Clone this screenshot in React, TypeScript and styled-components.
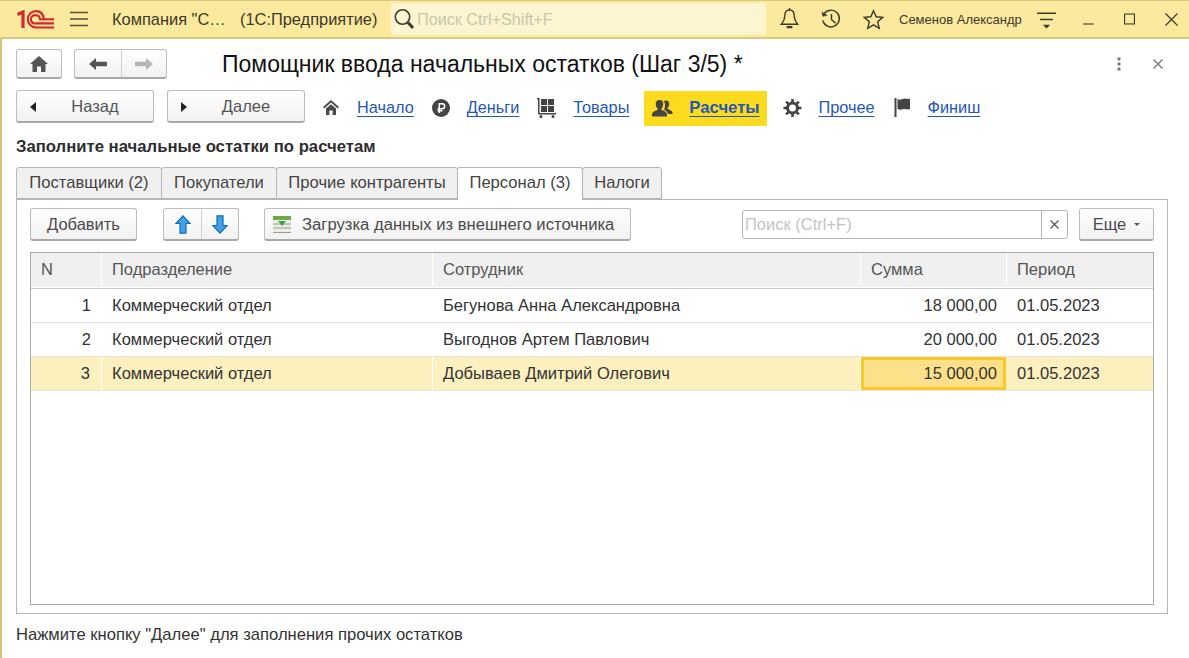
import React from "react";
import styled, { createGlobalStyle } from "styled-components";

const Global = createGlobalStyle`
  html, body { margin: 0; padding: 0; background: #fff; overflow: hidden; }
  * { box-sizing: border-box; }
  body { font-family: "Liberation Sans", Arial, sans-serif; color: #333; }
`;

const Page = styled.div`
  width: 1189px;
  height: 658px;
  display: flex;
  flex-direction: column;
  border-left: 2px solid #d2c67e;
  background: #fff;
`;

const TopBar = styled.header`
  height: 39px;
  flex: none;
  display: flex;
  align-items: center;
  background: #fbe99e;
  border-top: 1px solid #d6ca80;
  border-bottom: 2px solid #d6ca80;
  margin-left: -2px;
  padding-left: 17px;
`;

const MenuSlot = styled.span`
  margin-left: 16px;
  display: flex;
`;

const TopTitle = styled.div`
  margin-left: 24px;
  width: 279px;
  display: flex;
  font-size: 16.4px;
  color: #3d3a2a;
  white-space: nowrap;
`;

const TopCompany = styled.span`
  width: 128px;
`;

const GlobalSearch = styled.div`
  width: 375px;
  height: 32px;
  display: flex;
  align-items: center;
  gap: 2px;
  padding-left: 2px;
  background: #fdf5cf;
  font-size: 16.2px;
  color: #c9c5ae;
`;

const TopIcons = styled.div`
  display: flex;
  align-items: center;
  margin-left: 14px;
  gap: 22px;
`;

const UserName = styled.span`
  margin-left: 15px;
  font-size: 13px;
  color: #3d3a2a;
  white-space: nowrap;
`;

const WindowControls = styled.div`
  margin-left: 15px;
  display: flex;
  align-items: center;
  gap: 30px;
`;

const PanelSlot = styled.span`
  display: flex;
  margin-right: -3px;
`;

const Content = styled.main`
  flex: 1;
  display: flex;
  flex-direction: column;
  padding: 10px 21px 0 14px;
  min-height: 0;
`;

const FormHead = styled.div`
  height: 30px;
  display: flex;
  align-items: center;
  flex: none;
`;

const RaisedButton = styled.button<{ $w?: number; $h?: number }>`
  width: ${(p) => (p.$w ? `${p.$w}px` : "auto")};
  height: ${(p) => p.$h ?? 33}px;
  flex: none;
  padding: 0;
  display: inline-flex;
  align-items: center;
  justify-content: center;
  border: 1px solid #bdbdbd;
  border-bottom: 2px solid #a9a9a9;
  border-radius: 3px;
  background: linear-gradient(#ffffff, #f1f1f1);
  font: 16.5px "Liberation Sans", Arial, sans-serif;
  color: #4a4a4a;
`;

const Split = styled.span<{ $w: number }>`
  width: ${(p) => p.$w}px;
  height: 100%;
  display: flex;
  align-items: center;
  justify-content: center;
  & + & { border-left: 1px solid #cfcfcf; }
`;

const HistoryGroup = styled(RaisedButton)`
  margin-left: 12px;
`;

const MoveGroup = styled(RaisedButton)`
  margin-left: 26px;
`;

const LoadButton = styled(RaisedButton)`
  margin-left: 25px;
  justify-content: flex-start;
  padding: 1px 0 0 8px;
  font-size: 16.65px;
`;

const MoreButton = styled(RaisedButton)`
  margin-left: 11px;
`;

const FormTitle = styled.h1`
  margin: 0 0 0 55px;
  font-weight: 400;
  font-size: 23px;
  color: #111;
  white-space: nowrap;
`;

const FormActions = styled.div`
  margin-left: auto;
  margin-right: 5px;
  display: flex;
  align-items: center;
  gap: 32px;
`;

const StepRow = styled.nav`
  margin-top: 11px;
  height: 36px;
  flex: none;
  display: flex;
  align-items: flex-start;
`;

const StepButton = styled(RaisedButton)`
  position: relative;
  margin-right: 13px;
  padding: 1px 0 0 20px;
  color: #555;
`;

const StepArrow = styled.svg`
  position: absolute;
  left: 13px;
  top: 11px;
`;

const Steps = styled.div`
  display: flex;
  height: 35px;
  margin: 1px 0 0 -4px;
  gap: 2px;
  align-items: center;
`;

const StepItem = styled.div<{ $active?: boolean; $after?: number }>`
  height: 35px;
  display: flex;
  align-items: center;
  gap: ${(p) => (p.$active ? 16 : 17)}px;
  padding: 0 ${(p) => (p.$active ? 7 : 8)}px 2px 8px;
  margin-left: ${(p) => (p.$active ? "5px" : "0")};
  margin-right: ${(p) => p.$after ?? 0}px;
  background: ${(p) => (p.$active ? "#fcdb1e" : "transparent")};
`;

const StepLink = styled.a<{ $active?: boolean }>`
  color: #2557b8;
  font-size: ${(p) => (p.$active ? 16.7 : 16.3)}px;
  font-weight: ${(p) => (p.$active ? 700 : 400)};
  text-decoration: underline;
  text-underline-offset: 3px;
  white-space: nowrap;
`;

const Heading = styled.h2`
  margin: 11px 0 0;
  height: 20px;
  line-height: 20px;
  font-size: 16.7px;
  font-weight: 700;
  color: #2e2e2e;
  white-space: nowrap;
`;

const Tabs = styled.div`
  margin-top: 10px;
  display: flex;
  height: 33px;
  flex: none;
  position: relative;
  z-index: 1;
`;

const Tab = styled.div<{ $active?: boolean; $w: number }>`
  width: ${(p) => p.$w}px;
  height: ${(p) => (p.$active ? 33 : 32)}px;
  padding-bottom: ${(p) => (p.$active ? 2 : 1)}px;
  display: flex;
  align-items: center;
  justify-content: center;
  background: ${(p) => (p.$active ? "#fff" : "#f0f0f0")};
  border: 1px solid #b5b5b5;
  border-bottom: ${(p) => (p.$active ? "none" : "1px solid #b5b5b5")};
  border-radius: 3px 3px 0 0;
  margin-right: -1px;
  font-size: 16.6px;
  color: #444;
  white-space: nowrap;
`;

const Panel = styled.section`
  margin-top: -1px;
  height: 415px;
  flex: none;
  border: 1px solid #b5b5b5;
  padding: 8px 13px 8px 13px;
  display: flex;
  flex-direction: column;
`;

const Toolbar = styled.div`
  height: 33px;
  flex: none;
  display: flex;
  align-items: center;
`;

const ToolText = styled.span`
  margin-left: 11px;
  white-space: nowrap;
`;

const SearchField = styled.div`
  margin-left: auto;
  width: 326px;
  height: 29px;
  display: flex;
  border: 1px solid #b5b5b5;
  border-radius: 3px;
  background: #fff;
`;

const SearchHint = styled.span`
  flex: 1;
  padding-left: 2px;
  line-height: 26px;
  font-size: 16.5px;
  color: #c4c4c4;
`;

const ClearBox = styled.span`
  width: 26px;
  display: flex;
  align-items: center;
  justify-content: center;
  border-left: 1px solid #b5b5b5;
`;

const MoreCaret = styled.span`
  width: 0;
  height: 0;
  margin-left: 8px;
  margin-top: 1px;
  border-left: 3px solid transparent;
  border-right: 3px solid transparent;
  border-top: 3px solid #555;
`;

const Table = styled.div`
  margin-top: 11px;
  flex: 1;
  border: 1px solid #a9a9a9;
  background: #fff;
  min-height: 0;
`;

const columns = "71px 331px 428px 146px 1fr";

const HeaderRow = styled.div`
  height: 36px;
  display: grid;
  grid-template-columns: ${columns};
  background: #fff;
  border-bottom: 1px solid #c9c9c9;
`;

const HeaderCell = styled.div`
  display: flex;
  align-items: center;
  padding: 0 0 2px 10px;
  background: #f0f0f0;
  margin-right: 1px;
  margin-bottom: 1px;
  font-size: 16.5px;
  color: #555;
  &:last-child { margin-right: 0; }
`;

const Row = styled.div<{ $selected?: boolean }>`
  height: 34px;
  display: grid;
  grid-template-columns: ${columns};
  background: ${(p) => (p.$selected ? "#fdf0bf" : "#fff")};
  border-bottom: 1px solid #e4e4e4;
`;

const Cell = styled.div<{ $sep?: boolean }>`
  display: flex;
  align-items: center;
  padding-left: 10px;
  font-size: 16.55px;
  color: #333;
  white-space: nowrap;
  border-right: ${(p) => (p.$sep ? "1px solid #fff" : "none")};
`;

const NumberCell = styled(Cell)`
  justify-content: flex-end;
  padding: 0 11px 0 0;
`;

const SumCell = styled(Cell)<{ $current?: boolean }>`
  justify-content: flex-end;
  padding: 0 ${(p) => (p.$current ? 9 : 10)}px 0 0;
  ${(p) =>
    p.$current
      ? `background:#fee08a;outline:3px solid #fbc926;outline-offset:-3px;margin-right:1px;`
      : ""}
`;

const Footer = styled.p`
  margin: 11px 0 0;
  line-height: 20px;
  font-size: 16.6px;
  color: #333;
  white-space: nowrap;
`;

const Logo = () => (
  <svg width="37" height="19" viewBox="0 0 37 19" fill="none" stroke="#d8262c" strokeWidth="2.1">
    <path d="M0.5 4.6 L6 2 V18" strokeWidth="3.2" />
    <path d="M37 17.5 H19 A8.2 8.2 0 1 1 19 1.1 C24 1.1 26.5 5 27 9.3" />
    <path d="M37 13.4 H19 A4.2 4.2 0 1 1 19 5.2 C21.5 5.2 22.7 7 23 9.3" />
    <path d="M22 9.3 H37" />
  </svg>
);

const Menu = () => (
  <svg width="18" height="16" viewBox="0 0 18 16" stroke="#55503a" strokeWidth="1.4">
    <path d="M0 1.5H18M0 8H18M0 14.5H18" />
  </svg>
);

const Magnifier = () => (
  <svg width="22" height="24" viewBox="0 0 22 24" fill="none">
    <circle cx="9.5" cy="10" r="7.2" stroke="#3a3a30" strokeWidth="1.6" />
    <path d="M15 15.5 L20 21" stroke="#3a3a30" strokeWidth="3" />
  </svg>
);

const Bell = () => (
  <svg width="19" height="24" viewBox="0 0 20 24" fill="none" stroke="#3d3a2a" strokeWidth="1.5">
    <path d="M10 2.5 C6 2.5 5 5.5 5 9 C5 13 3.5 15 1.5 17.5 H18.5 C16.5 15 15 13 15 9 C15 5.5 14 2.5 10 2.5Z" />
    <path d="M10 .5V2.5" />
    <path d="M7 20.5H13" strokeWidth="2.4" />
  </svg>
);

const History = () => (
  <svg width="20" height="20" viewBox="0 0 22 22" fill="none" stroke="#3d3a2a" strokeWidth="1.6">
    <path d="M3.2 5.5 A9.2 9.2 0 1 1 2 12.5" />
    <path d="M1 3 L2 8 L7 7" fill="#3d3a2a" strokeWidth="0.6" />
    <path d="M11.5 5.5 V11.5 L16 15.5" />
  </svg>
);

const Star = () => (
  <svg width="21" height="21" viewBox="0 0 22 22" fill="none" stroke="#3d3a2a" strokeWidth="1.5">
    <path d="M11 1.8 L13.8 8.2 L20.6 8.8 L15.4 13.4 L17 20.3 L11 16.7 L5 20.3 L6.6 13.4 L1.4 8.8 L8.2 8.2Z" />
  </svg>
);

const PanelMenu = () => (
  <svg width="19" height="19" viewBox="0 0 18 18" stroke="#3d3a2a" strokeWidth="1.4" fill="#3d3a2a">
    <path d="M0 3H18M3 9H15" fill="none" />
    <path d="M5.5 14H12.5L9 17.5Z" stroke="none" />
  </svg>
);

const Minimize = () => (
  <svg width="11" height="12" viewBox="0 0 11 12" stroke="#55503a" strokeWidth="1.2"><path d="M0 11H11" /></svg>
);
const Maximize = () => (
  <svg width="11" height="12" viewBox="0 0 12 12" fill="none" stroke="#3d3a2a" strokeWidth="1.2"><rect x=".6" y=".6" width="10.8" height="10.8" /></svg>
);
const CloseBig = () => (
  <svg width="13" height="13" viewBox="0 0 13 13" stroke="#3d3a2a" strokeWidth="1.2"><path d="M.5 .5L12.5 12.5M12.5 .5L.5 12.5" /></svg>
);
const CloseSmall = ({ c = "#666", s = 9 }: { c?: string; s?: number }) => (
  <svg width={s} height={s} viewBox="0 0 9 9" stroke={c} strokeWidth="1.2"><path d="M.5 .5L8.5 8.5M8.5 .5L.5 8.5" /></svg>
);
const Dots = () => (
  <svg width="4" height="14" viewBox="0 0 4 14" fill="#7a7a7a">
    <circle cx="2" cy="2" r="1.7" /><circle cx="2" cy="7" r="1.7" /><circle cx="2" cy="12" r="1.7" />
  </svg>
);

const Home = () => (
  <svg width="18" height="16" viewBox="0 0 18 16" fill="#555">
    <path d="M9 0 L18 8 H15.5 V16 H11 V10.5 H7 V16 H2.5 V8 H0Z" />
  </svg>
);
const StepHome = () => (
  <svg width="18" height="16" viewBox="-1 0 18 16" fill="#4a4a4a">
    <path d="M8 0 L16 7 L14.7 8.4 L8 2.6 L1.3 8.4 L0 7Z" />
    <path d="M3 8.4 L8 4.2 L13 8.4 V15 H9.6 V10.5 H6.4 V15 H3Z" />
  </svg>
);
const ArrowH = ({ c, flip }: { c: string; flip?: boolean }) => (
  <svg width="18" height="12" viewBox="0 0 18 12" fill={c} style={flip ? { transform: "scaleX(-1)" } : undefined}>
    <path d="M0 6 L7 0 V3.8 H18 V8.2 H7 V12Z" />
  </svg>
);
const Ruble = () => (
  <svg width="18" height="18" viewBox="0 0 18 18">
    <circle cx="9" cy="9" r="9" fill="#444" />
    <path d="M7.3 14 V4.7 H10.2 A2.5 2.5 0 0 1 10.2 9.7 H5.5 M5.5 11.8 H10.5" fill="none" stroke="#fff" strokeWidth="1.5" />
  </svg>
);
const Cart = () => (
  <svg width="19" height="20" viewBox="0 0 19 20" fill="#444">
    <path d="M0 0H2.5V15H19V16.5H1V1.5H0Z" />
    <rect x="4" y="1" width="6" height="6" /><rect x="11" y="1" width="6" height="6" />
    <rect x="4" y="8" width="6" height="6" /><rect x="11" y="8" width="6" height="6" />
    <circle cx="4" cy="18.5" r="1.5" /><circle cx="16" cy="18.5" r="1.5" />
  </svg>
);
const People = () => (
  <svg width="21" height="18" viewBox="0 0 21 18" fill="#444">
    <path d="M14 1.5 C16.5 1.5 17.5 3.5 17.2 5.5 C17 7 16.4 8.2 15.6 9 V10 C17.5 10.6 20 11.5 20.5 13.5 V15 H16 C15.5 13 14 11.6 12 10.8 C12.8 9.5 13 8 13 6 C13 4.3 12.5 3 11.7 2.2 C12.3 1.7 13 1.5 14 1.5Z" />
    <path d="M7.5 1 C10.5 1 11.5 3.2 11.2 5.5 C11 7.5 10.2 9 9.4 9.8 V11 C11.5 11.6 14.5 12.6 15 15 V17.5 H0 V15 C.5 12.6 3.5 11.6 5.6 11 V9.8 C4.8 9 4 7.5 3.8 5.5 C3.5 3.2 4.5 1 7.5 1Z" />
  </svg>
);
const Gear = () => (
  <svg width="19" height="18" viewBox="0 0 19 18" fill="none" stroke="#444">
    <g transform="translate(.5 0)">
      <circle cx="9" cy="9" r="5" strokeWidth="3" />
      <path d="M9 0V4M9 14V18M0 9H4M14 9H18M2.6 2.6L5.4 5.4M12.6 12.6L15.4 15.4M15.4 2.6L12.6 5.4M5.4 12.6L2.6 15.4" strokeWidth="2.6" />
    </g>
  </svg>
);
const Flag = () => (
  <svg width="17" height="19" viewBox="0 0 16 19" fill="#444">
    <rect x="0" y="0" width="2" height="19" />
    <path d="M3 1 C6 3 8 .5 10 .5 C12 .5 13.5 1.5 15.5 .5 V11 C13.5 12 12 11 10 11 C8 11 6 12.5 3 11Z" />
  </svg>
);
const ArrowV = ({ up }: { up?: boolean }) => (
  <svg width="16" height="19" viewBox="0 0 16 19" style={up ? undefined : { transform: "scaleY(-1)" }}>
    <path d="M8 .8 L15.2 8.5 H11 V18.2 H5 V8.5 H.8Z" fill="#41a0e8" stroke="#0f6fb8" strokeWidth="1.2" />
  </svg>
);
const LoadIcon = () => (
  <svg width="18" height="17" viewBox="0 0 18 17">
    <rect x="0" y="0" width="18" height="17" fill="#e9efe2" />
    <rect x="0" y="0" width="18" height="4" fill="#6da84a" />
    <path d="M0 8H18M0 12H18M0 16.5H18" stroke="#9a9a9a" strokeWidth="1" />
    <path d="M5 5H13L9 10Z" fill="#3fa23a" />
  </svg>
);

const rows = [
  { n: 1, dep: "Коммерческий отдел", name: "Бегунова Анна Александровна", sum: "18 000,00" },
  { n: 2, dep: "Коммерческий отдел", name: "Выгоднов Артем Павлович", sum: "20 000,00" },
  { n: 3, dep: "Коммерческий отдел", name: "Добываев Дмитрий Олегович", sum: "15 000,00", selected: true },
];

const tabs = [
  { t: "Поставщики (2)", w: 146 },
  { t: "Покупатели", w: 116 },
  { t: "Прочие контрагенты", w: 182 },
  { t: "Персонал (3)", w: 126, active: true },
  { t: "Налоги", w: 80 },
];

export default function App() {
  return (
    <Page>
      <Global />
      <TopBar>
        <Logo />
        <MenuSlot><Menu /></MenuSlot>
        <TopTitle>
          <TopCompany>Компания "С…</TopCompany>
          <span>(1С:Предприятие)</span>
        </TopTitle>
        <GlobalSearch>
          <Magnifier />
          Поиск Ctrl+Shift+F
        </GlobalSearch>
        <TopIcons>
          <Bell />
          <History />
          <Star />
        </TopIcons>
        <UserName>Семенов Александр</UserName>
        <WindowControls>
          <PanelSlot><PanelMenu /></PanelSlot>
          <Minimize />
          <Maximize />
          <CloseBig />
        </WindowControls>
      </TopBar>
      <Content>
        <FormHead>
          <RaisedButton $w={46} $h={30}><Home /></RaisedButton>
          <HistoryGroup $h={30}>
            <Split $w={46}><ArrowH c="#555" /></Split>
            <Split $w={45}><ArrowH c="#b5b5b5" flip /></Split>
          </HistoryGroup>
          <FormTitle>Помощник ввода начальных остатков (Шаг 3/5) *</FormTitle>
          <FormActions>
            <Dots />
            <CloseSmall c="#777" s={10} />
          </FormActions>
        </FormHead>
        <StepRow>
          <StepButton $w={138}>
            <StepArrow width="6" height="10" viewBox="0 0 6 10"><path d="M6 0V10L0 5Z" fill="#222" /></StepArrow>
            Назад
          </StepButton>
          <StepButton $w={138}>
            <StepArrow width="6" height="10" viewBox="0 0 6 10"><path d="M0 0V10L6 5Z" fill="#222" /></StepArrow>
            Далее
          </StepButton>
          <Steps>
            <StepItem><StepHome /><StepLink>Начало</StepLink></StepItem>
            <StepItem><Ruble /><StepLink>Деньги</StepLink></StepItem>
            <StepItem><Cart /><StepLink>Товары</StepLink></StepItem>
            <StepItem $active $after={6}><People /><StepLink $active>Расчеты</StepLink></StepItem>
            <StepItem $after={1}><Gear /><StepLink>Прочее</StepLink></StepItem>
            <StepItem><Flag /><StepLink>Финиш</StepLink></StepItem>
          </Steps>
        </StepRow>
        <Heading>Заполните начальные остатки по расчетам</Heading>
        <Tabs>
          {tabs.map((t) => (
            <Tab key={t.t} $w={t.w} $active={t.active}>{t.t}</Tab>
          ))}
        </Tabs>
        <Panel>
          <Toolbar>
            <RaisedButton $w={107}>Добавить</RaisedButton>
            <MoveGroup>
              <Split $w={37}><ArrowV up /></Split>
              <Split $w={37}><ArrowV /></Split>
            </MoveGroup>
            <LoadButton $w={367}>
              <LoadIcon />
              <ToolText>Загрузка данных из внешнего источника</ToolText>
            </LoadButton>
            <SearchField>
              <SearchHint>Поиск (Ctrl+F)</SearchHint>
              <ClearBox><CloseSmall c="#555" /></ClearBox>
            </SearchField>
            <MoreButton $w={75}>
              Еще<MoreCaret />
            </MoreButton>
          </Toolbar>
          <Table>
            <HeaderRow>
              <HeaderCell>N</HeaderCell>
              <HeaderCell>Подразделение</HeaderCell>
              <HeaderCell>Сотрудник</HeaderCell>
              <HeaderCell>Сумма</HeaderCell>
              <HeaderCell>Период</HeaderCell>
            </HeaderRow>
            {rows.map((r) => (
              <Row key={r.n} $selected={r.selected}>
                <NumberCell $sep={r.selected}>{r.n}</NumberCell>
                <Cell $sep={r.selected}>{r.dep}</Cell>
                <Cell $sep={r.selected}>{r.name}</Cell>
                <SumCell $current={r.selected}>{r.sum}</SumCell>
                <Cell>01.05.2023</Cell>
              </Row>
            ))}
          </Table>
        </Panel>
        <Footer>Нажмите кнопку "Далее" для заполнения прочих остатков</Footer>
      </Content>
    </Page>
  );
}
